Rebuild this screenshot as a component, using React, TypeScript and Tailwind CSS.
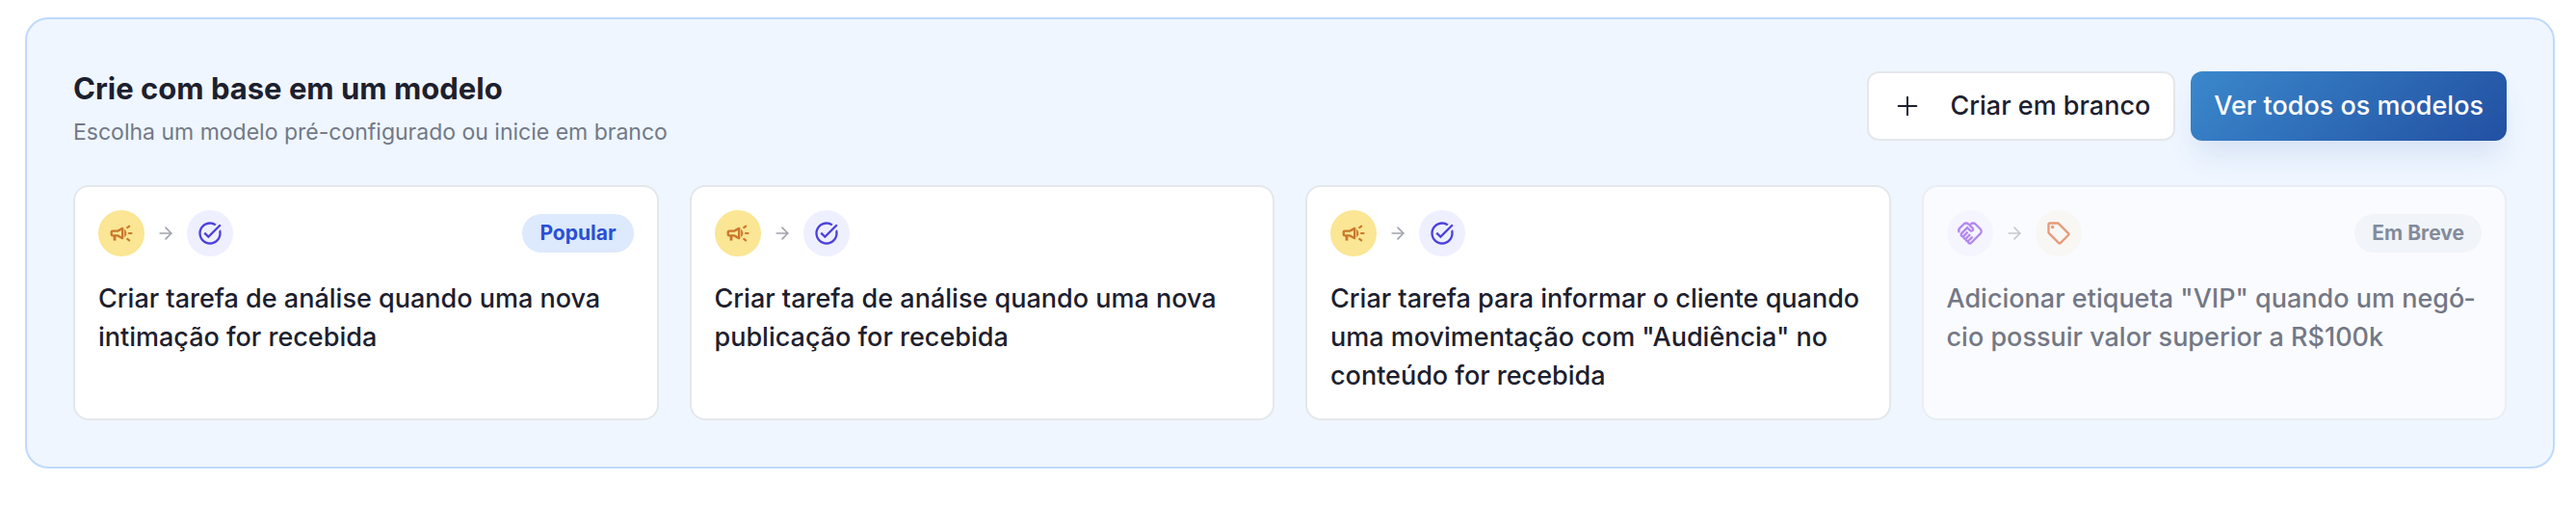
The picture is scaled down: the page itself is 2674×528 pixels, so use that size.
import React from 'react';
import { ArrowRight, Plus } from 'lucide-react';
import { MdOutlineHandshake, MdOutlineSell, MdTaskAlt } from 'react-icons/md';

interface Template {
  id: string;
  title: string;
  badge?: string;
  disabled?: boolean;
  from: React.ReactNode;
  to: React.ReactNode;
}

const StepIcon = ({ color, children }: { color: string; children: React.ReactNode }) => (
  <span className={`flex size-12 items-center justify-center rounded-full ${color}`}>{children}</span>
);

const CampaignIcon = ({ className }: { className?: string }) => (
  <svg
    className={className}
    viewBox="0 0 24 24"
    fill="none"
    stroke="currentColor"
    strokeWidth={2}
    strokeLinecap="round"
    strokeLinejoin="round"
  >
    {/* horn and handle */}
    <path d="M4.2 10h4.3L13 7.6v8.8L8.5 14H4.2a1 1 0 0 1-1-1v-2a1 1 0 0 1 1-1Z" />
    <path d="M6 14.5v4" strokeWidth={2.4} strokeLinecap="butt" />
    {/* sound */}
    <path d="M15 9v6a4 4 0 0 0 0-6Z" fill="currentColor" strokeWidth={0.6} />
    <path d="M17.3 7l1.7-1.3M18.8 12h2.2M17.3 17l1.7 1.3" strokeWidth={1.8} />
  </svg>
);

const campaign = (
  <StepIcon color="bg-[#fae694] text-[#cb772d]">
    <CampaignIcon className="size-7" />
  </StepIcon>
);

const task = (
  <StepIcon color="bg-[#eef0ff] text-[#4d41dc]">
    <MdTaskAlt className="size-7" />
  </StepIcon>
);

const TEMPLATES: Template[] = [
  {
    id: 'intimacao',
    title: 'Criar tarefa de análise quando uma nova intimação for recebida',
    badge: 'Popular',
    from: campaign,
    to: task,
  },
  {
    id: 'publicacao',
    title: 'Criar tarefa de análise quando uma nova publicação for recebida',
    from: campaign,
    to: task,
  },
  {
    id: 'audiencia',
    title: 'Criar tarefa para informar o cliente quando uma movimentação com "Audiência" no conteúdo for recebida',
    from: campaign,
    to: task,
  },
  {
    id: 'vip',
    title: 'Adicionar etiqueta "VIP" quando um negó\u00adcio possuir valor superior a R$100k',
    badge: 'Em Breve',
    disabled: true,
    from: (
      <StepIcon color="bg-[#f5f5ff] text-[#b388f1]">
        <MdOutlineHandshake className="size-7" />
      </StepIcon>
    ),
    to: (
      <StepIcon color="bg-[#f8f7f4] text-[#e69b7b]">
        <MdOutlineSell className="size-7" />
      </StepIcon>
    ),
  },
];

const TemplateCard = ({ template }: { template: Template }) => {
  const { title, badge, disabled, from, to } = template;

  return (
    <button
      type="button"
      disabled={disabled}
      className={`flex flex-col gap-6 rounded-2xl border-2 p-6 text-left ${
        disabled ? 'border-[#e9edf4] bg-[#fafbff] text-[#737885]' : 'border-[#e5e7eb] bg-white text-[#1c202e]'
      }`}
    >
      <div className="flex w-full items-center justify-between">
        <div className="flex items-center gap-3">
          {from}
          <ArrowRight
            className={`size-5 ${disabled ? 'text-[#c5c9d0]' : 'text-[#a0a3ac]'}`}
            strokeWidth={2}
          />
          {to}
        </div>
        {badge && (
          <span
            className={`rounded-full px-[18px] text-[21px] leading-10 font-bold ${
              disabled ? 'bg-[#f1f5fa] text-[#838b9b]' : 'bg-[#dde9fc] text-[#2a4fd3]'
            }`}
          >
            {badge}
          </span>
        )}
      </div>
      <p className="text-[27px] leading-10 font-medium">{title}</p>
    </button>
  );
};

export default function App() {
  return (
    <main className="bg-white pt-[18px] pr-[22px] pb-10 pl-[26px] font-['Inter',sans-serif]">
      <section className="rounded-3xl border-2 border-[#bfd9fe] bg-[#eff6ff] p-12">
        <header className="mb-10 flex items-center justify-between">
          <div className="pt-1">
            <h2 className="text-[31px] leading-10 font-bold text-[#1c202e]">Crie com base em um modelo</h2>
            <p className="mt-2.5 text-[23px] leading-[30px] text-[#727987]">
              Escolha um modelo pré-configurado ou inicie em branco
            </p>
          </div>
          <div className="flex items-center gap-4">
            <button
              type="button"
              className="flex h-18 items-center gap-7 rounded-xl border-2 border-[#e5e7eb] bg-white px-6 text-[27px] font-medium text-[#1c202e]"
            >
              <Plus className="size-8" strokeWidth={1.5} />
              Criar em branco
            </button>
            <button
              type="button"
              className="h-18 rounded-xl bg-linear-135 from-[#3b88cc] to-[#2350a2] px-6 text-[27px] font-medium text-white shadow-[0_20px_30px_-6px_rgba(35,80,162,0.12)]"
            >
              Ver todos os modelos
            </button>
          </div>
        </header>
        <div className="grid grid-cols-4 gap-8">
          {TEMPLATES.map(t => (
            <TemplateCard key={t.id} template={t} />
          ))}
        </div>
      </section>
    </main>
  );
}
